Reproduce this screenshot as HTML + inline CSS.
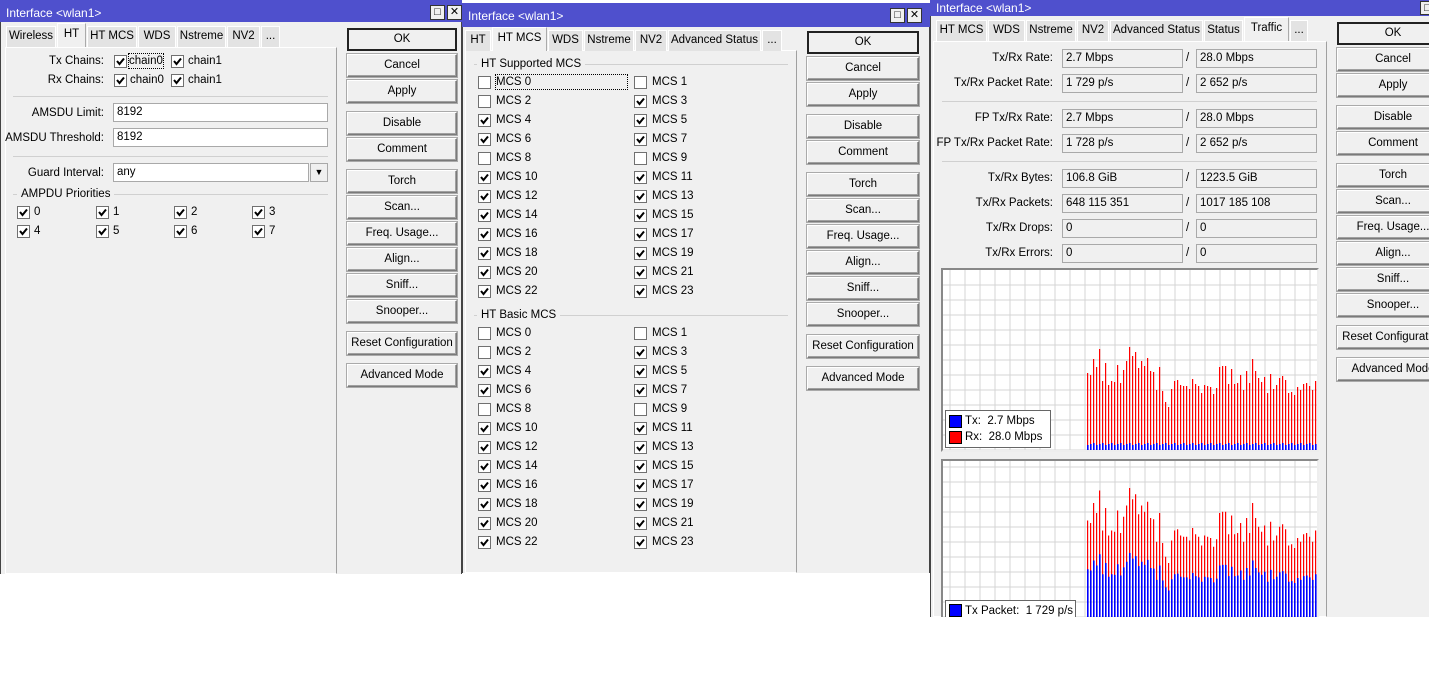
<!DOCTYPE html>
<html><head><meta charset="utf-8">
<style>
*{box-sizing:border-box;margin:0;padding:0}
body{width:1429px;height:698px;background:#fff;position:relative;overflow:hidden;font-family:"Liberation Sans",Arial,sans-serif;font-size:11px;color:#000}
.a{position:absolute}
.win{position:absolute;background:#f0f0f0;overflow:hidden}
.title{position:absolute;left:0;right:0;background:#4f50cd;color:#fff;font-size:12px;padding-left:6px}
.tb{position:absolute;width:15px;height:15px;background:#f0f0f0;border:1px solid #333;font-size:11px;line-height:12px;text-align:center;color:#000}
.tab{position:absolute;height:21px;background:#e3e3e3;border:1px solid #fff;border-bottom:none;text-align:center;line-height:19px;font-size:11.5px}
.tab.on{background:#f0f0f0;height:24px;line-height:20px;border-color:#fff #aaa #f0f0f0 #fff}
.panel{position:absolute;border:1px solid #fff;border-right:1px solid #a0a0a0;background:#f0f0f0}
.btn{position:absolute;height:23px;background:#f0f0f0;border:1px solid #8a8a8a;border-color:#fff #7a7a7a #7a7a7a #fff;box-shadow:inset -1px -1px 0 #a0a0a0,0 0 0 1px #aaa;text-align:center;line-height:21px;font-size:11.5px}
.btn.ok{border:2px solid #222;box-shadow:none;line-height:19px}
.cb{position:absolute;width:13px;height:13px;background:#fff;border:1px solid #707070}
.lbl{position:absolute;font-size:11.5px;white-space:nowrap;line-height:14px}
.r{text-align:right}
.inp{position:absolute;height:19px;background:#fff;border:1px solid #a9a9a9;padding-left:3px;line-height:17px;font-size:11.5px}
.ro{position:absolute;height:19px;background:#f0f0f0;border:1px solid #a9a9a9;padding-left:3px;line-height:17px;font-size:11.5px}
.sep{position:absolute;height:1px;background:#d0d0d0}
</style></head><body>
<div id="root"></div>
<script>
var R=document.getElementById('root');
function el(cls,x,y,w,h,txt,extra){var d=document.createElement('div');d.className=cls;d.style.left=x+'px';d.style.top=y+'px';if(w!=null)d.style.width=w+'px';if(h!=null)d.style.height=h+'px';if(txt!=null)d.innerHTML=txt;if(extra)d.style.cssText+=extra;R.appendChild(d);return d;}
var CK='<svg width="11" height="11" style="position:absolute;left:0;top:0"><path d="M2 5 L4.5 8 L9 2.5" stroke="#000" stroke-width="2" fill="none"/></svg>';
function cb(x,y,c){el('cb',x,y-6,13,13,c?CK:'');}
function btns(x,w,ys){var n=['OK','Cancel','Apply','Disable','Comment','Torch','Scan...','Freq. Usage...','Align...','Sniff...','Snooper...','Reset Configuration','Advanced Mode'];
for(var i=0;i<n.length;i++)el('btn'+(i==0?' ok':''),x,ys[i],w,23,n[i]);}
function tabs(y,list,on){for(var i=0;i<list.length;i++){var t=list[i];el('tab'+(t[0]==on?' on':''),t[1],t[0]==on?y-3:y,t[2]-t[1],null,t[0]);}}
function win(x,y,w,h){el('win',x,y,w,h,null,'border-left:1px solid #444;border-right:1px solid #444');}

/* ---------- window 1 ---------- */
win(0,0,462,574);
el('title',0,0,462,22,'Interface &lt;wlan1&gt;','line-height:26px;position:absolute');
el('tb',430,5,null,null,'□');el('tb',447,5,null,null,'✕');
el('panel',5,47,332,527);
tabs(26,[['Wireless',6,56],['HT',57,86],['HT MCS',87,137],['WDS',138,176],['Nstreme',177,226],['NV2',227,260],['...',261,280]],'HT');
el('lbl r',10,54,94,null,'Tx Chains:');el('lbl r',10,73,94,null,'Rx Chains:');
cb(114,61,1);el('lbl',129,54,null,null,'chain0','outline:1px dotted #000');cb(171,61,1);el('lbl',188,54,null,null,'chain1');
cb(114,80,1);el('lbl',130,73,null,null,'chain0');cb(171,80,1);el('lbl',188,73,null,null,'chain1');
el('sep',13,96,315,1);
el('lbl r',5,106,99,null,'AMSDU Limit:');el('inp',113,103,215,null,'8192');
el('lbl r',5,131,99,null,'AMSDU Threshold:');el('inp',113,128,215,null,'8192');
el('sep',13,156,315,1);
el('lbl r',5,166,99,null,'Guard Interval:');el('inp',113,163,196,null,'any');
el('inp',310,163,18,null,'<b style="font-size:9px">▼</b>','padding:0;text-align:center;background:#f0f0f0');
el('sep',13,194,315,1);el('lbl',17,187,null,null,'AMPDU Priorities','background:#f0f0f0;padding:0 4px;left:17px');
[17,96,174,252].forEach(function(x,i){cb(x,212,1);el('lbl',x+17,205,null,null,''+i);cb(x,231,1);el('lbl',x+17,224,null,null,''+(i+4));});
btns(347,110,[28,54,80,112,138,170,196,222,248,274,300,332,364]);

/* ---------- window 2 ---------- */
win(462,3,468,570);
el('title',462,3,468,24,'Interface &lt;wlan1&gt;','line-height:26px;position:absolute;padding-left:6px');
el('tb',890,8,null,null,'□');el('tb',907,8,null,null,'✕');
el('panel',465,50,332,523);
tabs(30,[['HT',465,491],['HT MCS',492,547],['WDS',548,583],['Nstreme',584,634],['NV2',635,667],['Advanced Status',668,761],['...',762,782]],'HT MCS');
function mcsBlock(y0,title){el('sep',474,y0,314,1);el('lbl',477,y0-7,null,null,title,'background:#f0f0f0;padding:0 4px');
var off={0:1,1:1,2:1,8:1,9:1};
for(var r=0;r<12;r++){var y=y0+18+r*19;var a=r*2,b=r*2+1;cb(478,y,!off[a]);el('lbl',496,y-7,null,null,'MCS '+a,a==0&&y0<100?'outline:1px dotted #000;width:131px':'');cb(634,y,!off[b]);el('lbl',652,y-7,null,null,'MCS '+b);}}
mcsBlock(64,'HT Supported MCS');mcsBlock(315,'HT Basic MCS');
btns(807,112,[31,57,83,115,141,173,199,225,251,277,303,335,367]);

/* ---------- window 3 ---------- */
el('win',930,0,499,617,null,'border-left:1px solid #444');
el('title',930,0,499,16,'Interface &lt;wlan1&gt;','line-height:16px;position:absolute;padding-left:6px');
el('tb',1420,1,null,null,'□','height:14px');
el('panel',933,41,394,576);
tabs(20,[['HT MCS',936,987],['WDS',988,1025],['Nstreme',1026,1076],['NV2',1077,1109],['Advanced Status',1110,1203],['Status',1204,1243],['Traffic',1244,1289],['...',1290,1308]],'Traffic');
var rows=[['Tx/Rx Rate:',58,'2.7 Mbps','28.0 Mbps'],['Tx/Rx Packet Rate:',83,'1 729 p/s','2 652 p/s'],['FP Tx/Rx Rate:',118,'2.7 Mbps','28.0 Mbps'],['FP Tx/Rx Packet Rate:',143,'1 728 p/s','2 652 p/s'],['Tx/Rx Bytes:',178,'106.8 GiB','1223.5 GiB'],['Tx/Rx Packets:',203,'648 115 351','1017 185 108'],['Tx/Rx Drops:',228,'0','0'],['Tx/Rx Errors:',253,'0','0']];
rows.forEach(function(r){el('lbl r',935,r[1]-7,118,null,r[0]);el('ro',1062,r[1]-9,121,null,r[2]);el('lbl',1186,r[1]-7,null,null,'/');el('ro',1196,r[1]-9,121,null,r[3]);});
el('sep',942,101,375,1);el('sep',942,161,375,1);
btns(1337,112,[22,48,74,106,132,164,190,216,242,268,294,326,358]);

/* graphs */
function graph(y,h,blueBig){
 var s='<svg width="378" height="'+h+'" style="position:absolute;left:0;top:0">';
 s+='<rect x="0" y="0" width="378" height="'+h+'" fill="#fff"/>';
 for(var x=7;x<378;x+=15)s+='<line x1="'+x+'" y1="0" x2="'+x+'" y2="'+h+'" stroke="#d4d4d4"/>';
 for(var yy=h-4;yy>0;yy-=15)s+='<line x1="0" y1="'+yy+'" x2="378" y2="'+yy+'" stroke="#d4d4d4"/>';
 var hs=[78,76,92,84,102,70,88,66,70,69,86,68,81,90,104,95,99,83,90,85,93,80,79,61,84,60,49,44,62,70,71,66,65,65,62,72,67,65,58,66,65,64,57,63,84,85,85,67,82,67,68,76,61,80,68,92,80,73,69,74,58,77,62,66,73,75,71,58,59,56,64,61,67,68,65,61,70,78];
 var base=h-3;
 for(var i=0;i<hs.length;i++){var x=144+i*3,rh=hs[i]*(blueBig?1.25:1);
  s+='<rect x="'+x+'" y="'+(base-rh)+'" width="1.2" height="'+rh+'" fill="#f00"/>';
  var bh=blueBig?rh*0.5:6+((i*7)%3);
  s+='<rect x="'+x+'" y="'+(base-bh)+'" width="1.6" height="'+bh+'" fill="#00f"/>';}
 s+='</svg>';
 return el('a',941,y,378,h,s,'border:2px solid #888;border-right-color:#eee;border-bottom-color:#eee;overflow:hidden');}
graph(268,184,0);graph(459,160,1);
el('a',945,410,106,38,'<div style="position:absolute;left:3px;top:4px;width:13px;height:13px;background:#00f;border:1px solid #000"></div><div class="lbl" style="left:19px;top:3px">Tx:&nbsp; 2.7 Mbps</div><div style="position:absolute;left:3px;top:20px;width:13px;height:13px;background:#f00;border:1px solid #000"></div><div class="lbl" style="left:19px;top:19px">Rx:&nbsp; 28.0 Mbps</div>','background:#fff;border:1px solid #666');
el('a',945,600,131,20,'<div style="position:absolute;left:3px;top:3px;width:13px;height:13px;background:#00f;border:1px solid #000"></div><div class="lbl" style="left:19px;top:3px">Tx Packet:&nbsp; 1 729 p/s</div>','background:#fff;border:1px solid #666');
el('a',930,617,499,81,null,'background:#fff');
</script>
</body></html>
